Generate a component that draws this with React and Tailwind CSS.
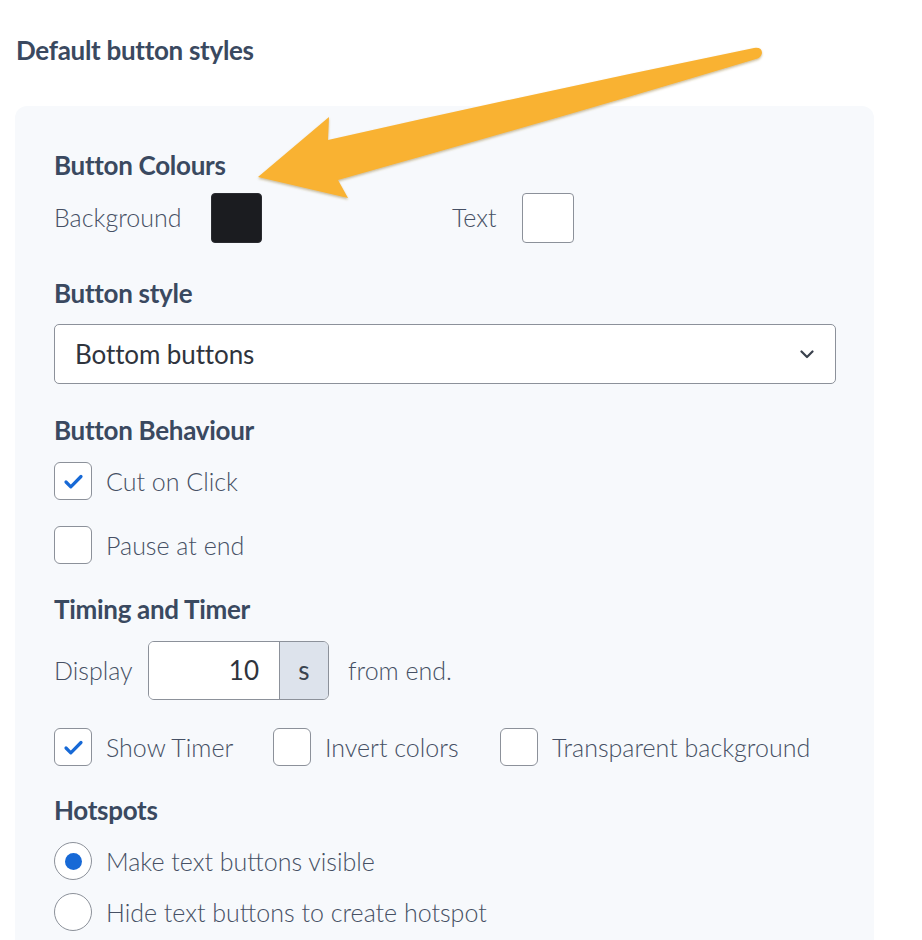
import React, { useState } from 'react';

const Check = () => (
  <svg width="21" height="17" viewBox="0 0 21 17" fill="none">
    <path d="M3 9l4.8 4.8L18 3.5" stroke="#1769d6" strokeWidth="3.2" strokeLinecap="round" strokeLinejoin="round" />
  </svg>
);

const Checkbox = ({ checked, label }) => (
  <label className="flex items-center gap-[14px] cursor-pointer">
    <span className="w-[38px] h-[38px] shrink-0 rounded-[6px] border border-[#8c919a] bg-white flex items-center justify-center">
      {checked && <Check />}
    </span>
    <span className="text-[25px] leading-[30px] font-light text-[#465064]">{label}</span>
  </label>
);

const Radio = ({ checked, label }) => (
  <label className="flex items-center gap-[14px] cursor-pointer">
    <span className="w-[38px] h-[38px] shrink-0 rounded-full border border-[#8c919a] bg-white flex items-center justify-center">
      {checked && <span className="w-[17px] h-[17px] rounded-full bg-[#1769d6]" />}
    </span>
    <span className="text-[25px] leading-[30px] font-light text-[#465064]">{label}</span>
  </label>
);

const Heading = ({ children, className = '' }) => (
  <h3 className={`text-[26px] leading-[30px] font-bold text-[#3a4960] tracking-[-0.3px] ${className}`}>{children}</h3>
);

// big yellow pointer arrow laid over the panel
const Arrow = () => (
  <svg className="absolute left-0 top-0 pointer-events-none" width="922" height="260" viewBox="0 0 922 260">
    <defs>
      <filter id="sh" x="-10%" y="-10%" width="120%" height="130%">
        <feDropShadow dx="0" dy="1.5" stdDeviation="1.2" floodColor="#8a6a20" floodOpacity="0.45" />
      </filter>
    </defs>
    <path
      d="M258 177 L329 117 L328 140 Q 540 92 754 48 Q 762 47 762 53 Q 761 58 756 59 Q 560 118 338 180 L348 198 Z"
      fill="#f9b233"
      filter="url(#sh)"
      strokeLinejoin="round"
    />
  </svg>
);

export default function App() {
  const [seconds] = useState(10);

  return (
    <div className="relative w-[922px] h-[940px] overflow-hidden bg-white font-['Lato','Noto_Sans',sans-serif]">
      <h2 className="pl-4 pt-[35px] text-[26px] leading-[30px] font-bold text-[#3a4960] tracking-[-0.3px]">
        Default button styles
      </h2>

      <div className="mt-[41px] ml-[15px] w-[859px] rounded-[12px] bg-[#f7f9fc] pl-[39px] pt-[44px] pb-10">
        <Heading>Button Colours</Heading>
        <div className="mt-[13px] flex items-center h-[50px]">
          <span className="text-[25px] font-light text-[#465064] w-[157px]">Background</span>
          <span className="w-[51px] h-[50px] rounded-[4px] bg-[#1b1c20] border border-[#2a2b30]" />
          <span className="ml-[190px] text-[25px] font-light text-[#465064] w-[70px]">Text</span>
          <span className="w-[52px] h-[50px] rounded-[4px] bg-white border border-[#8c919a]" />
        </div>

        <Heading className="mt-[35px]">Button style</Heading>
        <div className="mt-[16px] w-[782px] h-[60px] rounded-[5px] border border-[#8c919a] bg-white flex items-center justify-between pl-[20px] pr-[21px]">
          <span className="text-[26px] text-[#2f343d] tracking-[-0.1px]">Bottom buttons</span>
          <svg width="14" height="9" viewBox="0 0 14 9" fill="none">
            <path d="M1.5 1.5L7 7l5.5-5.5" stroke="#3a414d" strokeWidth="2.2" strokeLinecap="round" strokeLinejoin="round" />
          </svg>
        </div>

        <Heading className="mt-[31px]">Button Behaviour</Heading>
        <div className="mt-[17px] flex flex-col gap-[26px]">
          <Checkbox checked label="Cut on Click" />
          <Checkbox label="Pause at end" />
        </div>

        <Heading className="mt-[30px]">Timing and Timer</Heading>
        <div className="mt-[17px] flex items-center">
          <span className="text-[25px] font-light text-[#465064] w-[94px]">Display</span>
          <div className="flex h-[59px] w-[181px] rounded-[6px] border border-[#8c919a] overflow-hidden">
            <div className="w-[130px] bg-white flex items-center justify-end pr-[20px] text-[26px] text-[#2f343d]">{seconds}</div>
            <div className="flex-1 bg-[#dde3ec] border-l border-[#8c919a] flex items-center justify-center text-[26px] text-[#3a4350]">s</div>
          </div>
          <span className="ml-[19px] text-[25px] font-light text-[#465064]">from end.</span>
        </div>

        <div className="mt-[28px] flex items-center">
          <div className="w-[219px]"><Checkbox checked label="Show Timer" /></div>
          <div className="w-[227px]"><Checkbox label="Invert colors" /></div>
          <Checkbox label="Transparent background" />
        </div>

        <Heading className="mt-[29px]">Hotspots</Heading>
        <div className="mt-[17px] flex flex-col gap-[13px]">
          <Radio checked label="Make text buttons visible" />
          <Radio label="Hide text buttons to create hotspot" />
        </div>
      </div>

      <Arrow />
    </div>
  );
}
